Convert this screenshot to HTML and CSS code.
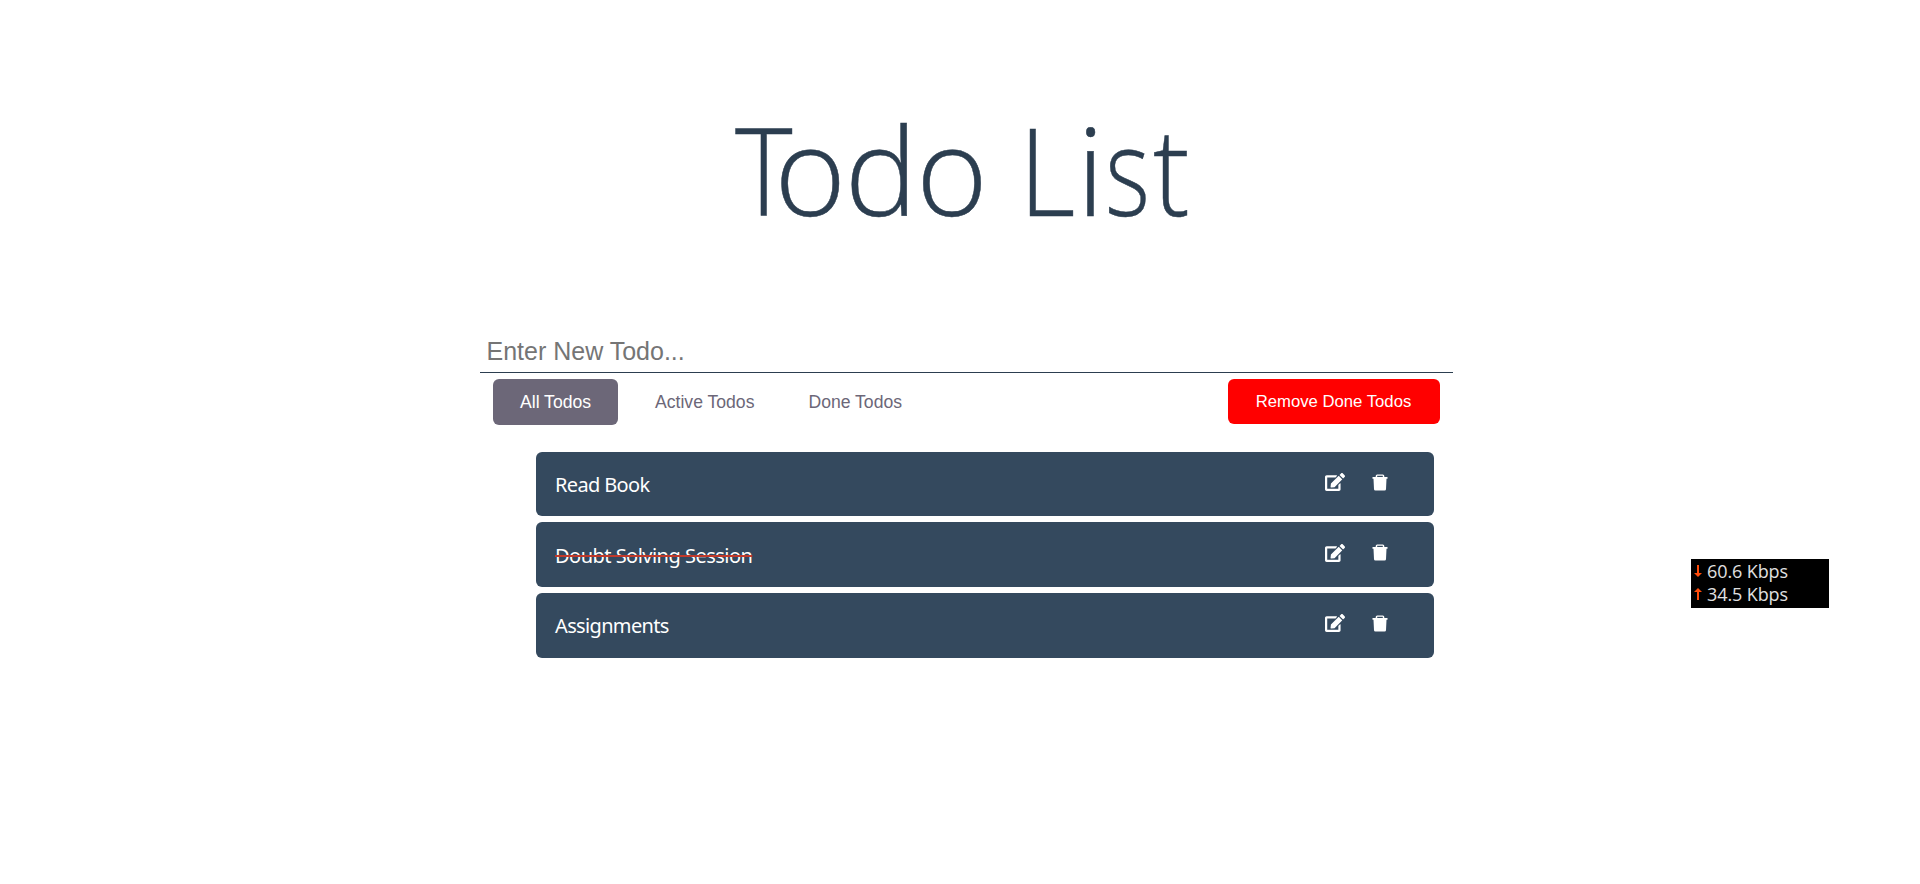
FILE: index.html
```html
<!DOCTYPE html>
<html lang="en">
<head>
<meta charset="utf-8">
<title>Todo List</title>
<link rel="stylesheet" href="styles.css">
</head>
<body>
<svg class="sprite" aria-hidden="true">
  <symbol id="edit" viewBox="0 0 576 512"><path d="M402.6 83.2l90.2 90.2c3.8 3.8 3.8 10 0 13.8L274.4 405.6l-92.8 10.3c-12.4 1.4-22.9-9.1-21.5-21.5l10.3-92.8L388.8 83.2c3.8-3.8 10-3.8 13.8 0zm162-22.9l-48.8-48.8c-15.2-15.2-39.9-15.2-55.2 0l-35.4 35.4c-3.8 3.8-3.8 10 0 13.8l90.2 90.2c3.8 3.8 10 3.8 13.8 0l35.4-35.4c15.2-15.3 15.2-40 0-55.2zM384 346.2V448H64V128h229.800c3.200 0 6.200-1.300 8.500-3.500l40-40c7.600-7.600 2.200-20.500-8.500-20.500H48C21.500 64 0 85.500 0 112v352c0 26.500 21.500 48 48 48h352c26.500 0 48-21.500 48-48V306.200c0-10.700-12.900-16-20.500-8.500l-40 40c-2.200 2.300-3.500 5.300-3.500 8.500z"/></symbol>
  <symbol id="trash" viewBox="0 0 16 17"><path fill-rule="evenodd" d="M3.700 3V2Q3.700.5 5.200.5h5.600q1.500 0 1.500 1.500V3h3.200v1.700h-1L14 15.200q-.1 1.300-1.400 1.300H3.400q-1.300 0-1.400-1.300L1.500 4.700h-1V3zM5.200 3h5.600V1.700H5.200z"/></symbol>
</svg>
<main class="app">
  <h1 class="title"><span class="cap-t">T</span><span class="round">odo</span> <span class="cap-l">L</span><span class="i">i</span><span class="s">s</span><span class="t">t</span></h1>
  <input class="entry" type="text" placeholder="Enter New Todo...">
  <div class="toolbar">
    <button class="tab active">All Todos</button>
    <button class="tab">Active Todos</button>
    <button class="tab">Done Todos</button>
    <button class="remove">Remove Done Todos</button>
  </div>
  <ul class="list">
    <li class="item"><span class="label">Read Book</span><svg class="icon edit"><use href="#edit"/></svg><svg class="icon trash"><use href="#trash"/></svg></li>
    <li class="item"><span class="label done">Doubt Solving Session</span><svg class="icon edit"><use href="#edit"/></svg><svg class="icon trash"><use href="#trash"/></svg></li>
    <li class="item"><span class="label">Assignments</span><svg class="icon edit"><use href="#edit"/></svg><svg class="icon trash"><use href="#trash"/></svg></li>
  </ul>
</main>
<aside class="meter">
  <div class="rate"><svg class="arrow" viewBox="0 0 8 12"><path d="M3 0h2v8h3L4 12 0 8h3z"/></svg><span>60.6 Kbps</span></div>
  <div class="rate"><svg class="arrow" viewBox="0 0 8 12"><path d="M3 12h2V4h3L4 0 0 4h3z"/></svg><span>34.5 Kbps</span></div>
</aside>
</body>
</html>
```
FILE: styles.css
```css
* { box-sizing: border-box; }
body { margin: 0; background: #fff; font-family: "Noto Sans", sans-serif; overflow: hidden; }
.sprite { position: absolute; width: 0; height: 0; }
.app { width: 973px; margin-left: 480px; padding-top: 82px; }
.title { margin: 0; height: 248px; padding-left: 254.500px; line-height: 174px; font-family: "Open Sans", sans-serif; font-size: 122px; font-weight: 300; color: #2c3e50; white-space: nowrap; -webkit-text-stroke: .5px #2c3e50; }
.title span { display: inline-block; transform-origin: 0 50%; }
.cap-t { transform: scaleX(.9); margin-right: -24px; }
.round { letter-spacing: -1.200px; }
.cap-l { transform: scaleX(.9); margin: 0 -5px 0 1px; }
.i { margin-right: 1px; }
.s { transform: scaleX(.79); margin-right: -9.500px; }
.t { transform: scaleX(.9); }
.entry { display: block; width: 973px; height: 43px; padding: 0 6.500px; border: 0; border-bottom: 1px solid #2c3e50; outline: 0; font-family: "Liberation Sans", sans-serif; font-size: 25px; }
.entry::placeholder { color: #757575; }
.toolbar { display: flex; align-items: flex-start; padding: 6px 13px 0; height: 79px; }
.tab, .remove { border: 0; border-radius: 6px; padding: 0 27px; height: 46px; font-family: "Liberation Sans", sans-serif; font-size: 17.6px; background: #fff; color: #6c6778; white-space: nowrap; }
.tab.active { background: #6c6778; color: #fff; width: 125px; margin-right: 10px; }
.remove { margin-left: auto; width: 212px; height: 45px; padding: 0 1px 0 0; font-size: 16.7px; background: #f00; color: #fff; }
.list { list-style: none; margin: 0 19px 0 56px; padding: 0; display: grid; gap: 6px; }
.item { display: flex; align-items: center; height: 64.450px; padding: 0 46px 0 19px; border-radius: 6px; background: #34495e; color: #fff; font-size: 20px; }
.item:last-child { height: 65px; }
.label { margin-right: auto; padding-top: 1px; letter-spacing: -.65px; }
.done { text-decoration: line-through 2px #c0392b; letter-spacing: -.52px; }
.icon { fill: #fff; margin-top: -4px; }
.icon.edit { width: 20px; height: 18px; margin-right: 27px; }
.icon.trash { width: 16px; height: 17px; }
.meter { position: absolute; left: 1691px; top: 559px; width: 138px; height: 49px; padding: 0 0 0 3px; background: #000; color: #e0e0e0; font-family: "Open Sans", sans-serif; font-size: 18px; }
.rate { display: flex; align-items: center; height: 23px; gap: 5px; white-space: nowrap; }
.rate span { letter-spacing: -.1px; }
.arrow { width: 8px; height: 12px; fill: #ff4b0a; }
```
